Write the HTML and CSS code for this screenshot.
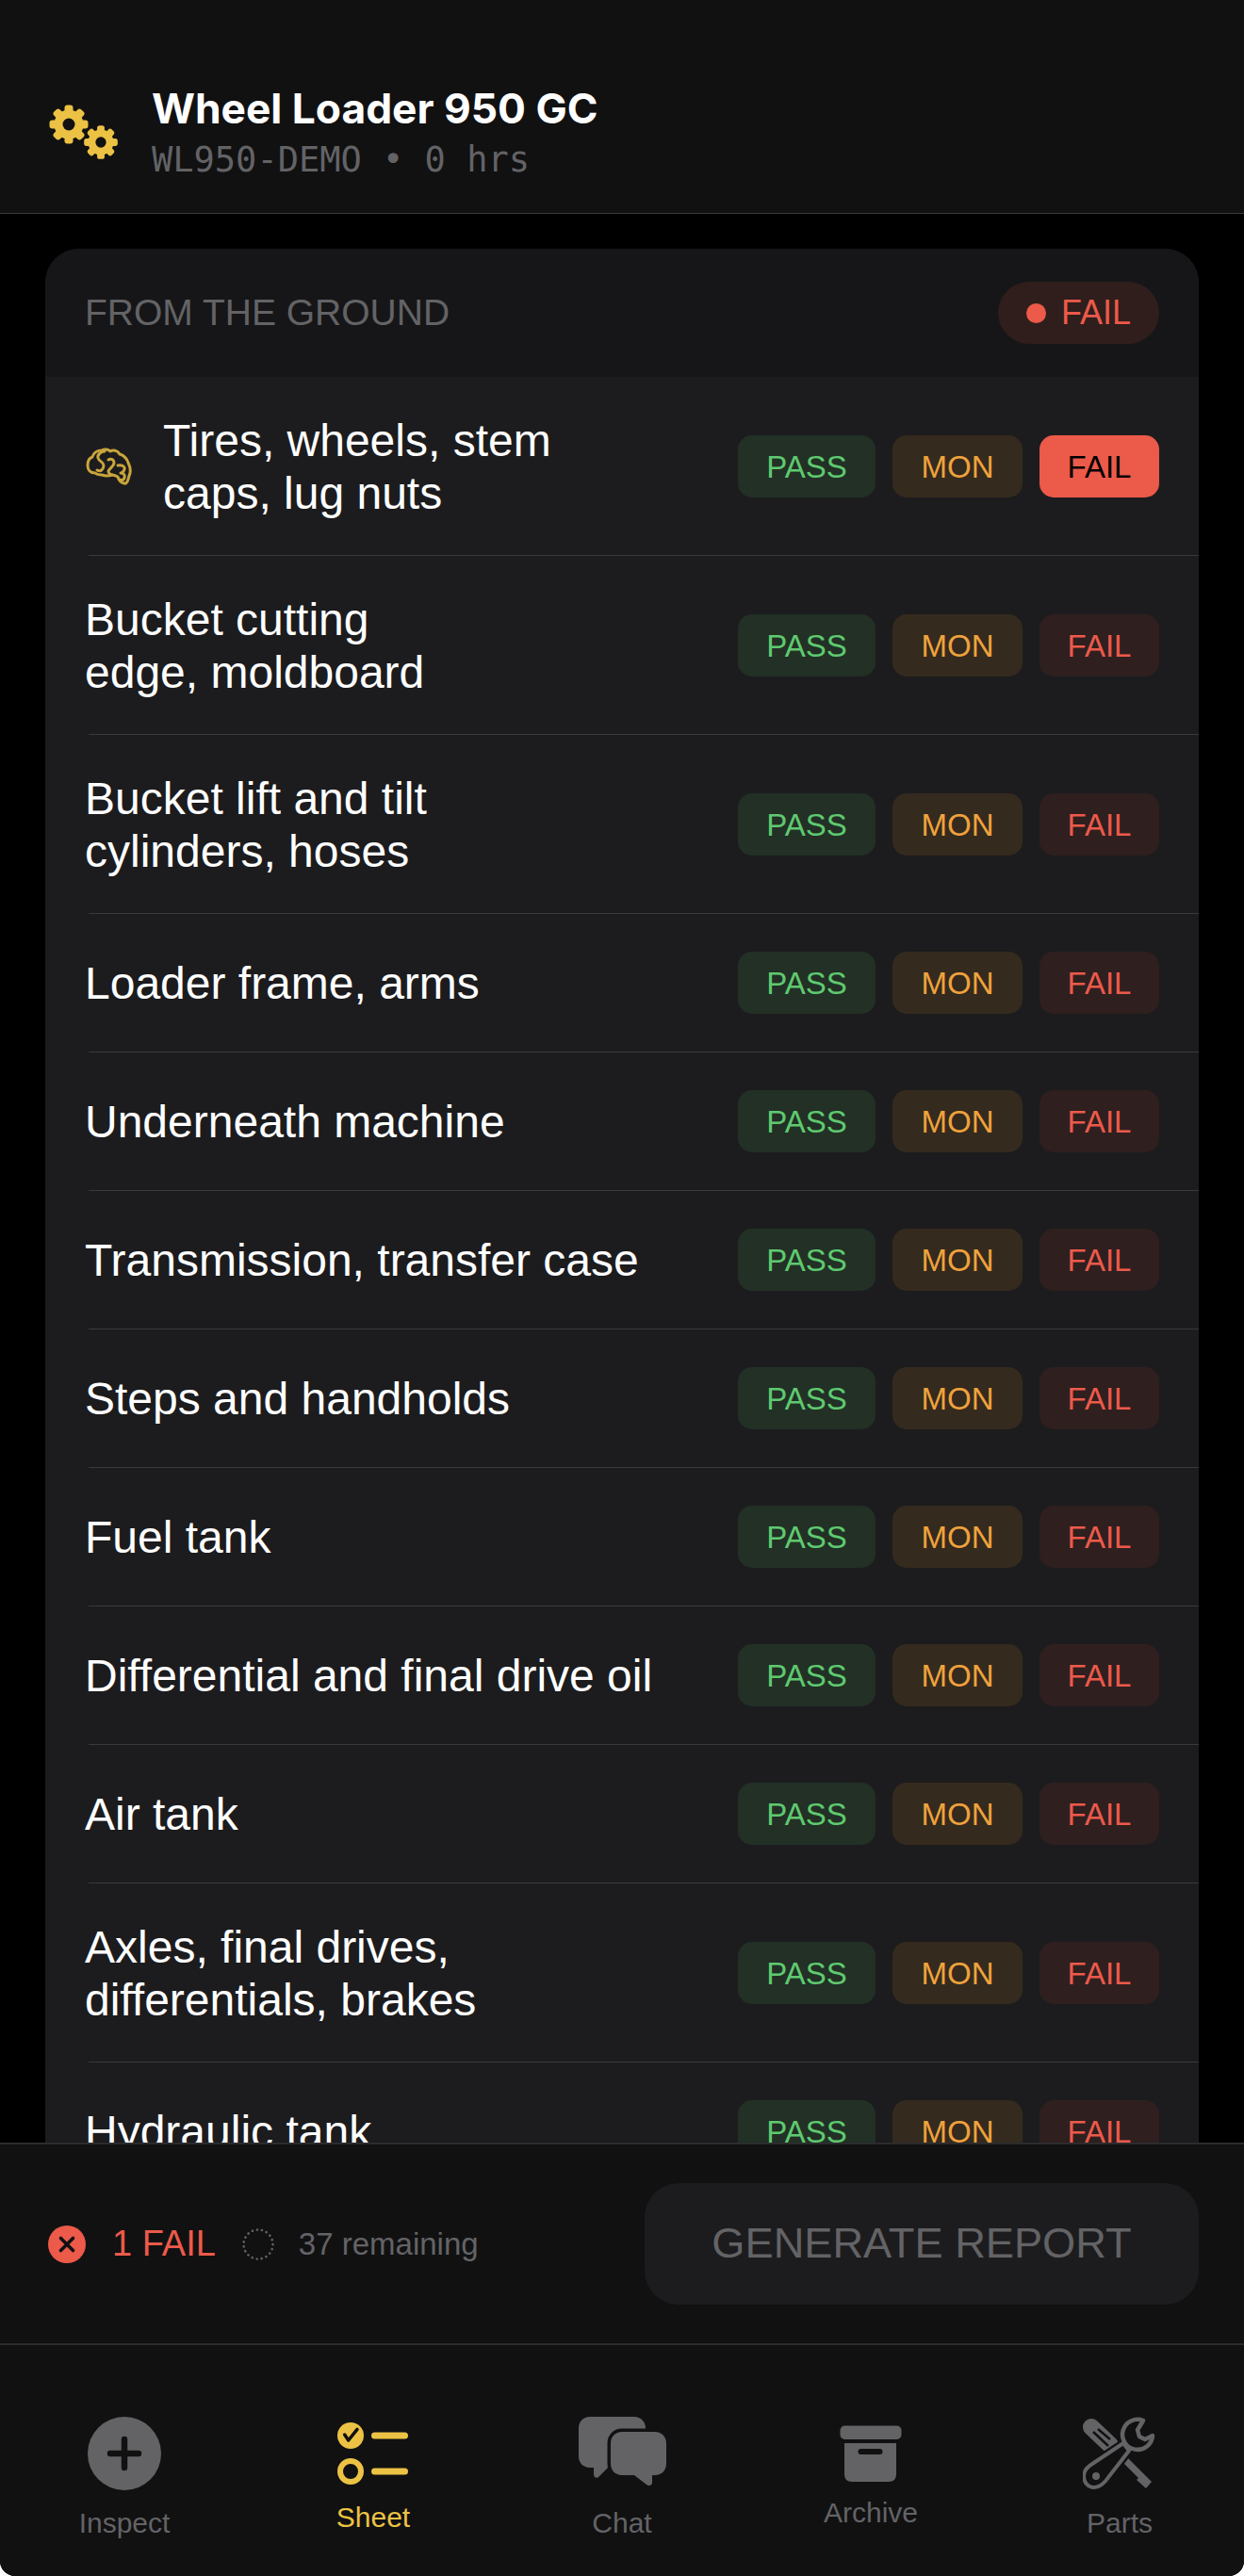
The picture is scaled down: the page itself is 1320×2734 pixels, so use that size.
FILE: index.html
```html
<!DOCTYPE html>
<html lang="en">
<head>
    <meta charset="UTF-8">
    <meta name="viewport" content="width=device-width, initial-scale=1.0">
    <title>Wheel Loader 950 GC</title>
    <link rel="stylesheet" href="styles.css">
</head>
<body>
    <div class="app">
        <header class="top-bar">
            <svg class="gears" width="80" height="80" viewBox="0 0 80 80">
                <defs>
                    <g id="tooth"><rect x="-4.5" y="-20.5" width="9" height="10" rx="3"/></g>
                </defs>
                <g transform="translate(23 23)" fill="#ecc244">
                    <circle r="15.5"/>
                    <use href="#tooth"/>
                    <use href="#tooth" transform="rotate(45)"/>
                    <use href="#tooth" transform="rotate(90)"/>
                    <use href="#tooth" transform="rotate(135)"/>
                    <use href="#tooth" transform="rotate(180)"/>
                    <use href="#tooth" transform="rotate(225)"/>
                    <use href="#tooth" transform="rotate(270)"/>
                    <use href="#tooth" transform="rotate(315)"/>
                    <circle r="6.5" fill="#111112"/>
                </g>
                <g transform="translate(57 42) scale(.87)" fill="#ecc244">
                    <circle r="15.5"/>
                    <use href="#tooth"/>
                    <use href="#tooth" transform="rotate(45)"/>
                    <use href="#tooth" transform="rotate(90)"/>
                    <use href="#tooth" transform="rotate(135)"/>
                    <use href="#tooth" transform="rotate(180)"/>
                    <use href="#tooth" transform="rotate(225)"/>
                    <use href="#tooth" transform="rotate(270)"/>
                    <use href="#tooth" transform="rotate(315)"/>
                    <circle r="6.5" fill="#111112"/>
                </g>
            </svg>
            <div class="machine">
                <div class="machine-name">Wheel Loader 950 GC</div>
                <div class="machine-meta">WL950-DEMO • 0 hrs</div>
            </div>
        </header>

        <main class="sheet">
            <section class="card">
                <div class="card-head">
                    <span class="card-title">FROM THE GROUND</span>
                    <span class="fail-badge"><i class="dot"></i>FAIL</span>
                </div>

                <div class="row two-line">
                    <svg class="brain" width="60" height="50" viewBox="0 0 60 50" fill="none" stroke="#c9a53c" stroke-width="3" stroke-linecap="round" stroke-linejoin="round">
                        <path d="M8 24C8 19 10 16 13 15C14 11 18 8 23 8C26 6 30 7 32 9C35 7 40 8 42 12C46 13 50 17 51 21C53 25 54 31 52 35C51 39 50 44 47 43C44 43 41 40 40 36C38 35 36 34 34 34C31 35 26 35 23 34C20 34 18 34 16 32C11 32 8 29 8 24Z"/>
                        <path d="M26 9C22 9 18 13 19 16C20 20 25 20 25 24C25 28 22 31 18 29"/>
                        <path d="M30 18C33 16 36 18 36 21C36 25 31 27 30 30C30 32 32 34 34 34"/>
                        <path d="M40 24C44 23 48 25 47 28C46 31 44 32 43 32C46 32 48 34 47 37C46 40 44 40 43 39"/>
                    </svg>
                    <div class="item">Tires, wheels, stem<br>caps, lug nuts</div>
                    <div class="choices">
                        <span class="choice pass">PASS</span><span class="choice mon">MON</span><span class="choice fail on">FAIL</span>
                    </div>
                </div>
                <div class="row two-line">
                    <div class="item">Bucket cutting<br>edge, moldboard</div>
                    <div class="choices">
                        <span class="choice pass">PASS</span><span class="choice mon">MON</span><span class="choice fail">FAIL</span>
                    </div>
                </div>
                <div class="row two-line">
                    <div class="item">Bucket lift and tilt<br>cylinders, hoses</div>
                    <div class="choices">
                        <span class="choice pass">PASS</span><span class="choice mon">MON</span><span class="choice fail">FAIL</span>
                    </div>
                </div>
                <div class="row">
                    <div class="item">Loader frame, arms</div>
                    <div class="choices">
                        <span class="choice pass">PASS</span><span class="choice mon">MON</span><span class="choice fail">FAIL</span>
                    </div>
                </div>
                <div class="row">
                    <div class="item">Underneath machine</div>
                    <div class="choices">
                        <span class="choice pass">PASS</span><span class="choice mon">MON</span><span class="choice fail">FAIL</span>
                    </div>
                </div>
                <div class="row">
                    <div class="item">Transmission, transfer case</div>
                    <div class="choices">
                        <span class="choice pass">PASS</span><span class="choice mon">MON</span><span class="choice fail">FAIL</span>
                    </div>
                </div>
                <div class="row">
                    <div class="item">Steps and handholds</div>
                    <div class="choices">
                        <span class="choice pass">PASS</span><span class="choice mon">MON</span><span class="choice fail">FAIL</span>
                    </div>
                </div>
                <div class="row">
                    <div class="item">Fuel tank</div>
                    <div class="choices">
                        <span class="choice pass">PASS</span><span class="choice mon">MON</span><span class="choice fail">FAIL</span>
                    </div>
                </div>
                <div class="row">
                    <div class="item">Differential and final drive oil</div>
                    <div class="choices">
                        <span class="choice pass">PASS</span><span class="choice mon">MON</span><span class="choice fail">FAIL</span>
                    </div>
                </div>
                <div class="row">
                    <div class="item">Air tank</div>
                    <div class="choices">
                        <span class="choice pass">PASS</span><span class="choice mon">MON</span><span class="choice fail">FAIL</span>
                    </div>
                </div>
                <div class="row two-line">
                    <div class="item">Axles, final drives,<br>differentials, brakes</div>
                    <div class="choices">
                        <span class="choice pass">PASS</span><span class="choice mon">MON</span><span class="choice fail">FAIL</span>
                    </div>
                </div>
                <div class="row">
                    <div class="item">Hydraulic tank</div>
                    <div class="choices">
                        <span class="choice pass">PASS</span><span class="choice mon">MON</span><span class="choice fail">FAIL</span>
                    </div>
                </div>
            </section>
        </main>

        <div class="status-bar">
            <div class="status">
                <svg class="status-x" width="40" height="40" viewBox="0 0 40 40">
                    <circle cx="20" cy="20" r="20" fill="#ec5a4a"/>
                    <path d="M13.5 13.5L26.5 26.5M26.5 13.5L13.5 26.5" stroke="#111112" stroke-width="3.6" stroke-linecap="round"/>
                </svg>
                <span class="fail-count">1 FAIL</span>
                <svg class="status-ring" width="34" height="34" viewBox="0 0 34 34">
                    <circle cx="17" cy="17" r="15.5" fill="none" stroke="#636366" stroke-width="2.6" stroke-linecap="round" stroke-dasharray="0.1 5"/>
                </svg>
                <span class="remaining">37 remaining</span>
            </div>
            <div class="generate">GENERATE REPORT</div>
        </div>

        <nav class="tabs">
            <div class="tab">
                <svg width="78" height="84" viewBox="0 0 78 84">
                    <circle cx="39" cy="42" r="39" fill="#636366"/>
                    <path d="M39 27V57M24 42H54" stroke="#111112" stroke-width="6.5" stroke-linecap="round"/>
                </svg>
                <span>Inspect</span>
            </div>
            <div class="tab active">
                <svg width="76" height="72" viewBox="0 0 76 72">
                    <circle cx="14" cy="17" r="14" fill="#ecc244"/>
                    <path d="M7.7 16L11.7 22L21 10.3" fill="none" stroke="#111112" stroke-width="3.5" stroke-linecap="round" stroke-linejoin="round"/>
                    <circle cx="14" cy="55" r="11" fill="none" stroke="#ecc244" stroke-width="6"/>
                    <path d="M39.5 17H71.5M39.5 55H71.5" stroke="#ecc244" stroke-width="7" stroke-linecap="round"/>
                </svg>
                <span>Sheet</span>
            </div>
            <div class="tab">
                <svg width="93" height="84" viewBox="0 0 93 84" fill="#636366">
                    <path d="M12 3H59C66 3 71 8 71 15V46C71 52 66 57 59 57H31L22 66C20 69 16 68 16 64V57H12C5 57 0 52 0 45V15C0 8 5 3 12 3Z"/>
                    <path d="M46 19H81C88 19 93 24 93 31V53C93 60 88 65 81 65H78V73C78 76 74 77 72 75L59 65H46C39 65 34 60 34 53V31C34 24 39 19 46 19Z" stroke="#111112" stroke-width="7" paint-order="stroke"/>
                </svg>
                <span>Chat</span>
            </div>
            <div class="tab">
                <svg width="66" height="62" viewBox="0 0 66 62" fill="#636366">
                    <rect x="0.5" y="1.5" width="65" height="14.5" rx="5"/>
                    <path d="M5 20H60V53C60 58 57 61 52 61H13C8 61 5 58 5 53Z"/>
                    <rect x="19.5" y="26" width="26" height="6" rx="3" fill="#111112"/>
                </svg>
                <span>Archive</span>
            </div>
            <div class="tab">
                <svg width="78" height="84" viewBox="0 0 78 84" fill="#636366">
                    <g transform="translate(0 4)">
                        <path d="M9 10L29 29" fill="none" stroke="#636366" stroke-width="18" stroke-linecap="round"/>
                        <path d="M26 31L31 26L64 59L73 68L67 75L57 66L59 64Z"/>
                        <path d="M11 15L27 30M16 12L29 23" stroke="#111112" stroke-width="2.5"/>
                        <path d="M43 27L49 35L28 62C24 68 18 74 12 74C5 74 1 68 1 62C1 56 5 52 10 49Z" fill="#111112" stroke="#111112" stroke-width="9"/>
                        <path d="M43 27L49 35L28 62C24 68 18 74 12 74C5 74 1 68 1 62C1 56 5 52 10 49Z" fill="#111112" stroke="#636366" stroke-width="4" stroke-linejoin="round"/>
                        <circle cx="14" cy="62" r="4"/>
                        <path d="M64 3A16 16 0 1 0 74 19L66 23L60 20L58 13Z" fill="#111112" stroke="#636366" stroke-width="4.5" stroke-linejoin="round"/>
                    </g>
                </svg>
                <span>Parts</span>
            </div>
        </nav>
    </div>
</body>
</html>
```

FILE: styles.css
```css
* {
    box-sizing: border-box;
}

html, body {
    margin: 0;
    background: #fff;
}

.app {
    width: 1320px;
    height: 2734px;
    background: #000;
    border-radius: 0 0 16px 16px;
    overflow: hidden;
    display: flex;
    flex-direction: column;
    font-family: "Liberation Sans", Arial, sans-serif;
}

.top-bar {
    height: 227px;
    flex: none;
    background: #111112;
    border-bottom: 1px solid #3a3a3c;
    padding: 90px 0 0 50px;
    display: flex;
    align-items: flex-start;
}

.gears {
    flex: none;
    margin: 19px 31px 0 0;
}

.machine-name {
    font-family: Inter, "Liberation Sans", sans-serif;
    font-weight: 700;
    font-size: 44.3px;
    line-height: 50px;
    color: #fff;
}

.machine-meta {
    font-family: "DejaVu Sans Mono", monospace;
    font-size: 37px;
    line-height: 44px;
    margin-top: 8px;
    color: #636366;
}

.sheet {
    flex: 1;
    min-height: 0;
    overflow: hidden;
    padding: 37px 48px 0;
}

.card {
    background: #1c1c1e;
    border-radius: 36px 36px 0 0;
    overflow: hidden;
}

.card-head {
    height: 136px;
    background: #161618;
    padding: 0 42px;
    display: flex;
    align-items: center;
    justify-content: space-between;
}

.card-title {
    font-size: 39px;
    color: #636366;
}

.fail-badge {
    height: 66px;
    padding: 0 30px;
    border-radius: 33px;
    background: #2f1e1c;
    color: #ec5a4a;
    font-size: 36px;
    display: flex;
    align-items: center;
    gap: 16px;
}

.dot {
    width: 21px;
    height: 21px;
    border-radius: 50%;
    background: #ec5a4a;
}

.row {
    height: 147px;
    margin-left: 46px;
    padding-right: 42px;
    border-bottom: 1px solid #3a3a3c;
    display: flex;
    align-items: center;
}

.row.two-line {
    height: 190px;
}

.brain {
    flex: none;
    margin: 0 28px 0 -9px;
}

.item {
    flex: 1;
    margin-left: -4px;
    padding-top: 2px;
    font-size: 48px;
    line-height: 56px;
    color: #fff;
}

.brain + .item {
    margin-left: 0;
}

.choices {
    flex: none;
    display: flex;
    gap: 18px;
}

.choice {
    height: 66px;
    padding-top: 2px;
    border-radius: 15px;
    font-size: 33px;
    display: flex;
    align-items: center;
    justify-content: center;
}

.pass {
    width: 146px;
    background: #223026;
    color: #5fc96f;
}

.mon {
    width: 138px;
    background: #352a1e;
    color: #f0a23c;
}

.fail {
    width: 127px;
    background: #2f1f1f;
    color: #ec5a4a;
}

.fail.on {
    background: #ec5a4a;
    color: #000;
}

.status-bar {
    height: 215px;
    flex: none;
    background: #111112;
    border-top: 2px solid #2c2c2e;
    border-bottom: 2px solid #2c2c2e;
    padding: 0 48px 0 51px;
    display: flex;
    align-items: center;
    justify-content: space-between;
}

.status {
    display: flex;
    align-items: center;
}

.fail-count {
    font-size: 38px;
    color: #ec5a4a;
    margin: 0 28px;
}

.remaining {
    font-size: 33px;
    color: #636366;
    margin-left: 26px;
}

.generate {
    width: 588px;
    height: 129px;
    padding-bottom: 2px;
    border-radius: 36px;
    background: #1c1c1e;
    color: #636366;
    font-size: 45.2px;
    display: flex;
    align-items: center;
    justify-content: center;
}

.tabs {
    height: 245px;
    flex: none;
    background: #111112;
    padding-top: 34px;
    display: grid;
    grid-template-columns: repeat(5, 1fr);
}

.tab {
    display: flex;
    flex-direction: column;
    align-items: center;
    justify-content: center;
    gap: 14px;
    font-size: 30px;
    line-height: 36px;
    color: #636366;
}

.tab.active {
    color: #ecc244;
}
```
